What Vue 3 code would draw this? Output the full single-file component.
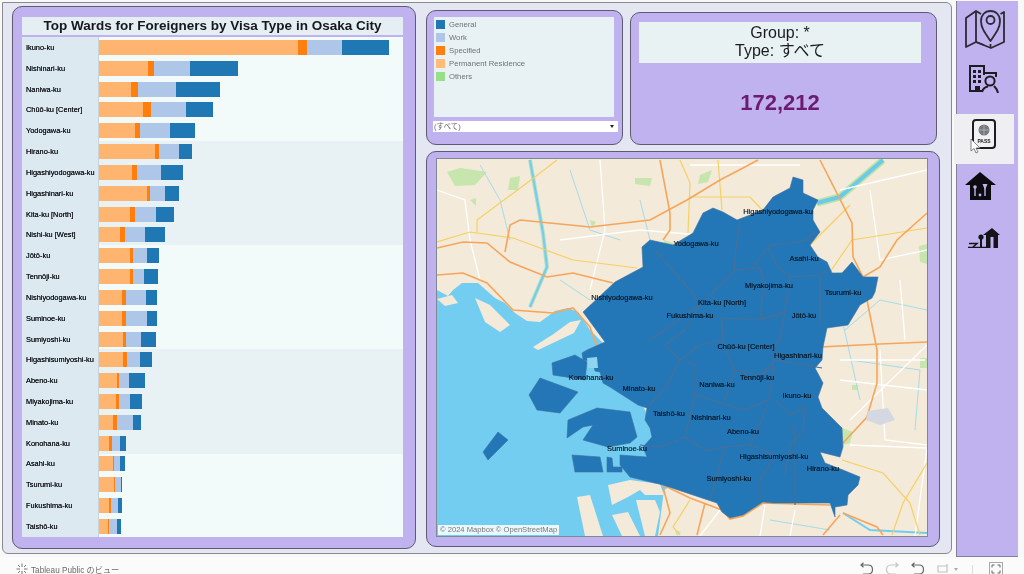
<template>
  <div class="page">
    <div class="top">
      <div class="dash">
        <section class="panel chart-panel">
          <h1 class="chart-title">Top Wards for Foreigners by Visa Type in Osaka City</h1>
          <div class="chart">
            <div v-for="(w, i) in wards" :key="w.name" class="row" :class="{ shaded: Math.floor(i / 5) % 2 === 1 }">
              <div class="ward-name">{{ w.name }}</div>
              <div class="bar">
                <span
                  v-for="(seg, j) in segments(w.stops)"
                  :key="j"
                  :style="{ width: seg + 'px', background: barColors[j] }"
                ></span>
              </div>
            </div>
          </div>
        </section>

        <div class="right-col">
          <div class="top-row">
            <section class="panel legend-panel">
              <div class="legend">
                <div v-for="l in legend" :key="l.name" class="legend-item">
                  <i :style="{ background: l.color }"></i>{{ l.name }}
                </div>
              </div>
              <div class="select">
                <span>(すべて)</span>
                <b></b>
              </div>
            </section>
            <section class="panel kpi-panel">
              <div class="kpi-head">
                <div>Group: *</div>
                <div>Type: すべて</div>
              </div>
              <div class="kpi-value">172,212</div>
            </section>
          </div>

          <section class="panel map-panel">
            <div class="map">
              <svg viewBox="437 159 490 377" width="490" height="377">
                <rect x="437" y="159" width="490" height="377" fill="#f3ead9" />
                <!-- parks -->
                <polygon v-for="(p, i) in parks" :key="'p' + i" :points="p" fill="#c6e6ae" />
                <!-- water -->
                <polygon
                  points="437,290 448,296 453,290 462,283 478,283 495,298 505,303 515,313 527,321 540,322 555,311 568,308 578,312 590,330 603,343 640,400 680,480 664,490 658,536 437,536"
                  fill="#72cdf0"
                />
                <polygon points="533,347 552,335 570,322 581,320 574,333 555,342 538,350" fill="#f3ead9" />
                <polygon points="437,299 452,295 458,303 445,306" fill="#f3ead9" />
                <polygon points="475,298 490,305 510,325 500,332 485,322" fill="#f3ead9" />
                <polygon points="608,485 630,480 660,484 664,495 645,495 640,490 628,497 612,505" fill="#f3ead9" />
                <polygon points="577,497 590,495 603,536 585,536" fill="#f3ead9" />
                <polygon points="612,515 628,512 640,536 622,536" fill="#f3ead9" />
                <polygon points="636,500 655,500 660,512 655,536 645,536" fill="#f3ead9" />

                <polyline v-for="(r, i) in rivers" :key="'b' + i" :points="r" fill="none" stroke="#a5dcec" stroke-width="1" />
                <polyline points="530,160 543,233 547,267 530,307" fill="none" stroke="#b5dfc0" stroke-width="4" />
                <polyline points="530,160 543,233 547,267 530,307" fill="none" stroke="#72cdf0" stroke-width="2" />
                <polyline points="883,160 840,197 817,203" fill="none" stroke="#b9e4a2" stroke-width="7" />
                <polyline points="883,160 840,197 817,203" fill="none" stroke="#6cc9ec" stroke-width="4" />
                <polyline points="843,513 870,530 927,533" fill="none" stroke="#72cdf0" stroke-width="2" />
                <polyline v-for="(r, i) in whites" :key="'w' + i" :points="r" fill="none" stroke="#ffffff" stroke-width="1.3" />
                <polyline v-for="(r, i) in yellows" :key="'y' + i" :points="r" fill="none" stroke="#f6d064" stroke-width="1.2" />
                <polyline v-for="(r, i) in oranges" :key="'o' + i" :points="r" fill="none" stroke="#f6a55a" stroke-width="1.6" />
                <polygon points="868,411 888,408 895,420 880,425 866,420" fill="#d3d8e3" />

                <!-- wards -->
                <g fill="#2377b6" stroke="#3f6f9c" stroke-width="0.6">
                  <polygon points="793,177 803,180 803,193 818,200 813,210 813,220 820,232 810,245 818,257 827,262 832,273 842,273 852,262 863,277 878,277 875,292 872,298 860,305 848,325 827,328 823,347 822,360 815,368 823,383 818,397 822,408 842,428 843,447 840,457 820,452 825,463 843,470 860,477 858,485 848,495 847,505 835,507 835,517 830,503 773,503 763,502 743,515 730,518 722,512 717,503 663,485 630,477 620,465 620,455 647,457 643,447 652,437 650,428 645,420 647,408 638,405 610,387 603,383 600,372 595,371 593,362 583,360 582,353 587,350 605,342 583,312 615,282 643,267 642,247 650,240 673,245 693,233 703,213 713,208 723,212 737,220 763,210 773,197 790,188" />
                  <polygon points="552,363 575,355 587,362 585,380 553,375" />
                  <polygon points="540,378 578,392 560,413 537,410 529,395" />
                  <polygon points="568,420 597,408 630,412 637,437 630,443 608,447 583,440 593,425 583,427 567,438" />
                  <polygon points="498,432 508,440 488,460 483,452" />
                  <polygon points="572,455 600,457 603,472 575,472" />
                  <polygon points="607,457 612,458 613,467 622,467 622,472 607,472" />
                </g>
                <polygon points="587,358 597,357 598,368 588,368" fill="#8ed6f0" />
                <polyline v-for="(b, i) in borders" :key="'l' + i" :points="b" fill="none" stroke="#4a6f96" stroke-width="1.2" />

                <text v-for="l in mapLabels" :key="l.t" :x="l.x" :y="l.y" class="map-label">{{ l.t }}</text>
              </svg>
              <div class="attribution">© 2024 Mapbox  © OpenStreetMap</div>
            </div>
          </section>
        </div>
      </div>

      <nav class="side-nav">
        <div class="nav-item">
          <svg viewBox="0 0 40 40" width="40" height="40" fill="none" stroke="#2b2b33" stroke-width="1.8" stroke-linejoin="round">
            <path d="M16 4 L11 1 L1 8 V37 L11 32 L26 38 L39 32 V2 L35.5 4" />
            <path d="M11 1 V32 M11 32 L19 35" />
            <path d="M25.5 31 C20 23 16 18 16 11 C16 5 20 1 25.5 1 C31 1 35 5 35 11 C35 18 31 23 25.5 31 Z" />
            <circle cx="25.5" cy="10" r="4" />
            <path d="M25.5 34 V37" />
          </svg>
        </div>
        <div class="nav-item">
          <svg viewBox="0 0 30 28" width="30" height="28" fill="none" stroke="#1c1c22" stroke-width="2">
            <path d="M13 26 H1 V1 H15 V10" />
            <path d="M15 8 H27 V12" />
            <g fill="#1c1c22" stroke="none">
              <rect x="4" y="5" width="3" height="3" /><rect x="9" y="5" width="3" height="3" />
              <rect x="4" y="10" width="3" height="3" /><rect x="9" y="10" width="3" height="3" />
              <rect x="4" y="15" width="3" height="3" /><rect x="9" y="15" width="3" height="3" />
              <rect x="6" y="21" width="5" height="5" />
            </g>
            <circle cx="21" cy="16" r="4.6" />
            <path d="M13 27 C14 23.5 16 22 19 21.5 M25 21 C27 23 28.5 25 29 28" />
          </svg>
        </div>
        <div class="nav-item active">
          <svg viewBox="0 0 24 30" width="24" height="30">
            <rect x="1" y="1" width="22" height="28" rx="3" fill="#f2f2f4" stroke="#1d1d24" stroke-width="2" />
            <circle cx="12" cy="11" r="5.5" fill="#77797f" />
            <path d="M6.5 11 H17.5 M12 5.5 V16.5" stroke="#c8c9cc" stroke-width="0.6" />
            <text x="12" y="24" text-anchor="middle" class="pass">PASS</text>
          </svg>
          <svg class="cursor" viewBox="0 0 11 16" width="11" height="16">
            <path d="M1 1 V13 L4 10.5 L6 15 L8 14 L6 10 H10 Z" fill="#fff" stroke="#666" stroke-width="0.8" />
          </svg>
        </div>
        <div class="nav-item">
          <svg viewBox="0 0 31 28" width="31" height="28">
            <path d="M15 0 L31 13 H26 V28 H5 V13 H0 Z" fill="#0c0c10" />
            <path d="M10 14 V24 M20 14 V24" stroke="#bfb2ef" stroke-width="1.4" />
            <circle cx="10" cy="15" r="1.8" fill="#bfb2ef" />
            <path d="M17.5 12 H22.5 L20 18 Z" fill="#bfb2ef" />
            <circle cx="15" cy="23" r="1.4" fill="#bfb2ef" />
          </svg>
        </div>
        <div class="nav-item">
          <svg viewBox="0 0 32 20" width="32" height="20">
            <path d="M24 0 L32 7 H30 V20 H18 V7 H15 Z" fill="#14141a" />
            <rect x="22.5" y="9" width="3" height="11" fill="#bfb2ef" />
            <circle cx="13" cy="9" r="2.6" fill="#14141a" />
            <path d="M13 10 V20" stroke="#14141a" stroke-width="2" />
            <path d="M0 19.5 H18 M1 15.5 H9 L5 19" fill="none" stroke="#14141a" stroke-width="1.5" />
          </svg>
        </div>
      </nav>
    </div>

    <footer class="footer">
      <div class="tableau">
        <svg viewBox="0 0 12 12" width="12" height="12" stroke="#777" stroke-width="1" fill="none">
          <path d="M6 0.5 V4 M6 8 V11.5 M0.5 6 H4 M8 6 H11.5 M2 2 L4 4 M8 8 L10 10 M10 2 L8 4 M4 8 L2 10" />
        </svg>
        <span>Tableau Public のビュー</span>
      </div>
      <div class="tools">
        <svg viewBox="0 0 14 14" width="14" height="14" fill="none" stroke="#666" stroke-width="1.2"><path d="M1 3 H8 C14 3 14 12 8 12 H3 M3.5 0.8 L1 3 L3.5 5.2" /></svg>
        <svg viewBox="0 0 14 14" width="14" height="14" fill="none" stroke="#c6c6c6" stroke-width="1.2"><path d="M13 3 H6 C0 3 0 12 6 12 H11 M10.5 0.8 L13 3 L10.5 5.2" /></svg>
        <svg class="revert" viewBox="0 0 14 14" width="14" height="14" fill="none" stroke="#666" stroke-width="1.2"><path d="M1 3 H8 C14 3 14 12 8 12 H3 M3.5 0.8 L1 3 L3.5 5.2" /></svg>
        <svg viewBox="0 0 14 10" width="14" height="10" fill="none" stroke="#c2c2c2" stroke-width="1.2"><path d="M2 2 H11 V8 H2 Z M11 0 V3" /></svg>
        <i class="caret"></i>
        <i class="sep"></i>
        <svg viewBox="0 0 14 14" width="14" height="14" fill="none" stroke="#666" stroke-width="1"><rect x="0.5" y="0.5" width="13" height="13" stroke="#aaa" /><path d="M3 5.5 V3 H5.5 M8.5 3 H11 V5.5 M11 8.5 V11 H8.5 M5.5 11 H3 V8.5" /></svg>
      </div>
    </footer>
  </div>
</template>

<script setup>
const barColors = ['#ffb570', '#ff7f0e', '#aec7e8', '#1f77b4']

const wards = [
  { name: 'Ikuno-ku', stops: [298, 307, 342, 389] },
  { name: 'Nishinari-ku', stops: [148, 154, 190, 238] },
  { name: 'Naniwa-ku', stops: [131, 138, 176, 220] },
  { name: 'Chūō-ku [Center]', stops: [143, 151, 186, 213] },
  { name: 'Yodogawa-ku', stops: [135, 140, 170, 195] },
  { name: 'Hirano-ku', stops: [155, 159, 179, 192] },
  { name: 'Higashiyodogawa-ku', stops: [132, 137, 161, 183] },
  { name: 'Higashinari-ku', stops: [147, 150, 165, 179] },
  { name: 'Kita-ku [North]', stops: [130, 135, 156, 174] },
  { name: 'Nishi-ku [West]', stops: [120, 125, 145, 165] },
  { name: 'Jōtō-ku', stops: [130, 133, 147, 159] },
  { name: 'Tennōji-ku', stops: [130, 133, 144, 158] },
  { name: 'Nishiyodogawa-ku', stops: [122, 126, 146, 157] },
  { name: 'Suminoe-ku', stops: [122, 126, 147, 157] },
  { name: 'Sumiyoshi-ku', stops: [123, 126, 141, 156] },
  { name: 'Higashisumiyoshi-ku', stops: [123, 127, 140, 152] },
  { name: 'Abeno-ku', stops: [117, 119, 129, 145] },
  { name: 'Miyakojima-ku', stops: [116, 119, 130, 142] },
  { name: 'Minato-ku', stops: [113, 117, 133, 141] },
  { name: 'Konohana-ku', stops: [109, 112, 120, 126] },
  { name: 'Asahi-ku', stops: [113, 114, 120, 125] },
  { name: 'Tsurumi-ku', stops: [114, 115, 121, 122] },
  { name: 'Fukushima-ku', stops: [109, 111, 118, 122] },
  { name: 'Taishō-ku', stops: [108, 109, 117, 121] }
]

const segments = (stops) => stops.map((s, i) => s - (i === 0 ? 99 : stops[i - 1]))

const legend = [
  { name: 'General', color: '#1f77b4' },
  { name: 'Work', color: '#aec7e8' },
  { name: 'Specified', color: '#ff7f0e' },
  { name: 'Permanent Residence', color: '#ffbb78' },
  { name: 'Others', color: '#98df8a' }
]

const oranges = [
  '437,248 463,242 487,243 510,262 547,277 573,273 613,283',
  '505,252 510,225 520,220 590,227 650,220 687,200 720,180 743,168 758,160',
  '660,160 670,213 670,230 663,240',
  '820,160 852,223 853,257 863,277',
  '863,277 880,267 897,240 927,213',
  '437,275 463,273 487,283 513,310 553,313 573,308 590,327 597,347',
  '820,347 880,344 927,342',
  '867,300 877,350 877,383 867,417 843,443',
  '663,485 690,498 722,510 730,519 743,516 763,503 830,505',
  '823,535 840,515',
  '843,513 877,527 883,535',
  '663,487 670,513 660,535',
  '705,503 697,535'
]

const yellows = [
  '437,242 470,232 513,238 573,260 637,268',
  '477,232 477,220 527,183 557,160',
  '680,160 690,183 688,233',
  '718,160 722,210',
  '690,197 750,197 765,213',
  '830,272 852,240 927,228',
  '810,245 850,205',
  '842,460 883,473 910,503 920,535',
  '927,463 903,503 892,535',
  '690,500 673,527 680,535'
]

const whites = [
  '437,190 465,200 470,240 480,280',
  '600,160 605,230 590,290',
  '640,230 700,235',
  '690,165 800,165',
  '840,190 927,170',
  '870,190 880,260 927,250',
  '840,380 927,390',
  '880,350 885,440 927,445',
  '850,420 927,345',
  '700,536 720,510',
  '760,536 765,505',
  '900,280 905,340',
  '560,240 640,230',
  '840,360 925,360',
  '850,445 927,448 915,536',
  '790,536 795,510'
]

const rivers = [
  '570,170 590,230 620,240',
  '640,200 650,240',
  '480,165 500,200 510,240',
  '845,330 880,300 927,310',
  '850,360 920,370 915,430',
  '840,310 860,400',
  '560,280 590,300',
  '770,520 830,530'
]

const parks = [
  '447,172 460,168 487,172 475,185 455,186',
  '635,178 652,178 650,186 635,184',
  '700,175 712,170 708,182 698,184',
  '919,246 927,244 927,264 920,262',
  '833,273 843,272 838,290 832,286',
  '842,428 853,432 850,443 843,445',
  '664,240 676,244 672,248 664,246',
  '920,358 927,358 927,368 920,368',
  '510,178 520,176 518,190 508,190',
  '590,220 596,222 592,228',
  '470,200 476,198 476,206',
  '852,385 858,385 857,390 852,390',
  '675,530 681,532 677,536'
]

const borders = [
  '655,250 690,290 700,303',
  '650,340 700,305 735,270 760,268 765,285 762,300 760,318',
  '734,270 737,240 740,222',
  '752,268 770,245 790,243 806,240 815,232',
  '767,245 780,270 790,275 785,310 780,340 775,345',
  '790,277 820,275 828,270',
  '820,276 820,325',
  '760,318 785,315',
  '720,318 760,320 785,312',
  '722,318 723,345 735,370 760,375 773,367 775,345',
  '700,305 685,330 665,345 680,360',
  '680,360 700,345 722,340',
  '685,360 695,365 695,395 685,437 705,450 725,447',
  '695,395 745,410 768,400 775,367',
  '775,400 790,415 805,407',
  '768,405 750,445 725,447 710,500',
  '750,445 775,455 760,480 760,500',
  '790,425 795,430 795,505',
  '805,407 803,430 790,445 785,475',
  '640,445 660,447 685,437',
  '650,405 665,388 680,360',
  '735,370 725,400',
  '760,375 775,360 822,368'
]

const mapLabels = [
  { t: 'Higashiyodogawa-ku', x: 778, y: 214 },
  { t: 'Yodogawa-ku', x: 696, y: 246 },
  { t: 'Asahi-ku', x: 804, y: 261 },
  { t: 'Miyakojima-ku', x: 769, y: 288 },
  { t: 'Tsurumi-ku', x: 843, y: 295 },
  { t: 'Nishiyodogawa-ku', x: 622, y: 300 },
  { t: 'Kita-ku [North]', x: 722, y: 305 },
  { t: 'Jōtō-ku', x: 804, y: 318 },
  { t: 'Fukushima-ku', x: 690, y: 318 },
  { t: 'Chūō-ku [Center]', x: 746, y: 349 },
  { t: 'Higashinari-ku', x: 798, y: 358 },
  { t: 'Tennōji-ku', x: 757, y: 380 },
  { t: 'Naniwa-ku', x: 717, y: 387 },
  { t: 'Ikuno-ku', x: 797, y: 398 },
  { t: 'Konohana-ku', x: 591, y: 380 },
  { t: 'Minato-ku', x: 639, y: 391 },
  { t: 'Taishō-ku', x: 669, y: 416 },
  { t: 'Nishinari-ku', x: 711, y: 420 },
  { t: 'Abeno-ku', x: 743, y: 434 },
  { t: 'Suminoe-ku', x: 627, y: 451 },
  { t: 'Higashisumiyoshi-ku', x: 774, y: 459 },
  { t: 'Hirano-ku', x: 823, y: 471 },
  { t: 'Sumiyoshi-ku', x: 729, y: 481 }
]
</script>

<style>
html,
body {
  margin: 0;
  background: #f8f8f8;
  overflow: hidden;
}
</style>

<style scoped>
.page {
  width: 1024px;
  height: 574px;
  display: flex;
  flex-direction: column;
  font-family: "Liberation Sans", "Noto Sans CJK JP", sans-serif;
  background: #f8f8f8;
  filter: blur(0.35px);
}

.top {
  display: flex;
  height: 557px;
  padding-top: 1px;
  box-sizing: border-box;
}

.dash {
  width: 950px;
  height: 552px;
  margin: 1px 0 0 2px;
  box-sizing: border-box;
  padding: 3px 0 0 9px;
  display: flex;
  align-items: flex-start;
  background: #e4e6f2;
  border: 1px solid #8a8a90;
  border-top-right-radius: 6px;
  border-bottom-right-radius: 6px;
  border-bottom-left-radius: 6px;
}

.panel {
  background: #bfb2ef;
  border: 1px solid #5e5a72;
  border-radius: 10px;
  box-sizing: border-box;
}

.chart-panel {
  width: 404px;
  height: 543px;
  flex-shrink: 0;
  padding: 10px 12px 11px 9px;
  display: flex;
  flex-direction: column;
  gap: 2px;
}

.chart-title {
  margin: 0;
  height: 18px;
  line-height: 18px;
  text-align: center;
  font-size: 13.5px;
  font-weight: 700;
  color: #15181c;
  background: #e5eff3;
}

.chart {
  flex: 1;
  display: flex;
  flex-direction: column;
  background: #f3fafa;
}

.row {
  flex: 1;
  display: flex;
  align-items: center;
}

.row.shaded {
  background: #e8f1f3;
}

.ward-name {
  width: 77px;
  height: 100%;
  box-sizing: border-box;
  padding-left: 4px;
  display: flex;
  align-items: center;
  flex-shrink: 0;
  font-size: 7.4px;
  color: #14171c;
  text-shadow: 0 0 0.6px #14171c;
  white-space: nowrap;
  background: #dde9f0;
  border-right: 1px solid #c8d4da;
}

.bar {
  display: flex;
  height: 15px;
}

.bar span {
  display: block;
  height: 100%;
}

.right-col {
  margin: 4px 0 0 10px;
  display: flex;
  flex-direction: column;
  gap: 6px;
}

.top-row {
  display: flex;
  gap: 7px;
  height: 135px;
}

.legend-panel {
  width: 197px;
  height: 135px;
  padding: 6px 4px 0 6px;
}

.legend {
  height: 100px;
  box-sizing: border-box;
  margin-right: 4px;
  margin-left: 1px;
  padding-top: 1px;
  background: #e8f1f3;
}

.legend-item {
  height: 13px;
  display: flex;
  align-items: center;
  gap: 4px;
  padding-left: 2px;
  font-size: 7.7px;
  color: #6d7278;
}

.legend-item i {
  width: 9px;
  height: 9px;
}

.select {
  margin-top: 4px;
  height: 11px;
  line-height: 1;
  padding: 0 4px 0 1px;
  display: flex;
  align-items: center;
  justify-content: space-between;
  background: #fff;
  font-size: 7.5px;
  color: #666;
}

.select b {
  border: 2.5px solid transparent;
  border-top: 3px solid #222;
  border-bottom: 0;
}

.kpi-panel {
  width: 307px;
  height: 133px;
  margin-top: 2px;
  padding: 9px 15px 0 8px;
  display: flex;
  flex-direction: column;
}

.kpi-head {
  height: 41px;
  background: #e9f2f3;
  text-align: center;
  font-size: 16px;
  line-height: 18px;
  padding-top: 2px;
  box-sizing: border-box;
  color: #1b1b1f;
}

.kpi-value {
  margin-top: 27px;
  text-align: center;
  font-size: 22px;
  font-weight: 700;
  color: #6c1b72;
}

.map-panel {
  width: 514px;
  height: 396px;
  padding: 7px 0 0 10px;
}

.map {
  position: relative;
  width: 490px;
  height: 377px;
  overflow: hidden;
  outline: 1px solid #7d8a92;
}

.map svg {
  display: block;
}

.map-label {
  font-size: 7.5px;
  fill: #06101c;
  stroke: #06101c;
  stroke-width: 0.15px;
  text-anchor: middle;
}

.attribution {
  position: absolute;
  left: 1px;
  bottom: 1px;
  padding: 0 2px;
  line-height: 10px;
  font-size: 7.6px;
  white-space: pre;
  color: #777;
  background: rgba(255, 255, 255, 0.85);
}

.side-nav {
  width: 62px;
  height: 556px;
  margin-left: 4px;
  display: flex;
  flex-direction: column;
  background: #bfb2ef;
  border: 1px solid #85809a;
  border-width: 0 0 1px 1px;
  box-sizing: border-box;
}

.nav-item {
  width: 100%;
  box-sizing: border-box;
  display: flex;
  align-items: center;
  justify-content: center;
  flex-shrink: 0;
}

.nav-item:nth-child(1) {
  height: 57px;
  padding-right: 6px;
}

.nav-item:nth-child(2) {
  height: 56px;
  padding: 0 8px 14px 0;
}

.nav-item.active {
  position: relative;
  width: 60px;
  height: 50px;
  margin-left: -3px;
  padding-bottom: 10px;
  background: #efeff2;
}

.cursor {
  position: absolute;
  left: 16px;
  top: 24px;
}

.pass {
  font-size: 5px;
  font-weight: 700;
  fill: #222;
}

.nav-item:nth-child(4) {
  height: 44px;
  padding-right: 14px;
}

.nav-item:nth-child(5) {
  height: 50px;
  padding: 9px 7px 0 0;
}

.footer {
  flex: 1;
  display: flex;
  align-items: center;
  justify-content: space-between;
  padding: 5px 21px 0 16px;
  background: #fbfbfb;
}

.tableau {
  display: flex;
  align-items: center;
  gap: 3px;
  font-size: 8.2px;
  color: #6a6a6a;
}

.tools {
  display: flex;
  align-items: center;
  gap: 11px;
}

.tools .revert {
  margin-left: 1px;
}

.caret {
  border: 2.5px solid transparent;
  border-top: 3px solid #aaa;
  border-bottom: 0;
  margin-left: -6.5px;
}

.sep {
  width: 1px;
  height: 9px;
  background: #ddd;
  margin: 0 5px 0 3px;
}
</style>
